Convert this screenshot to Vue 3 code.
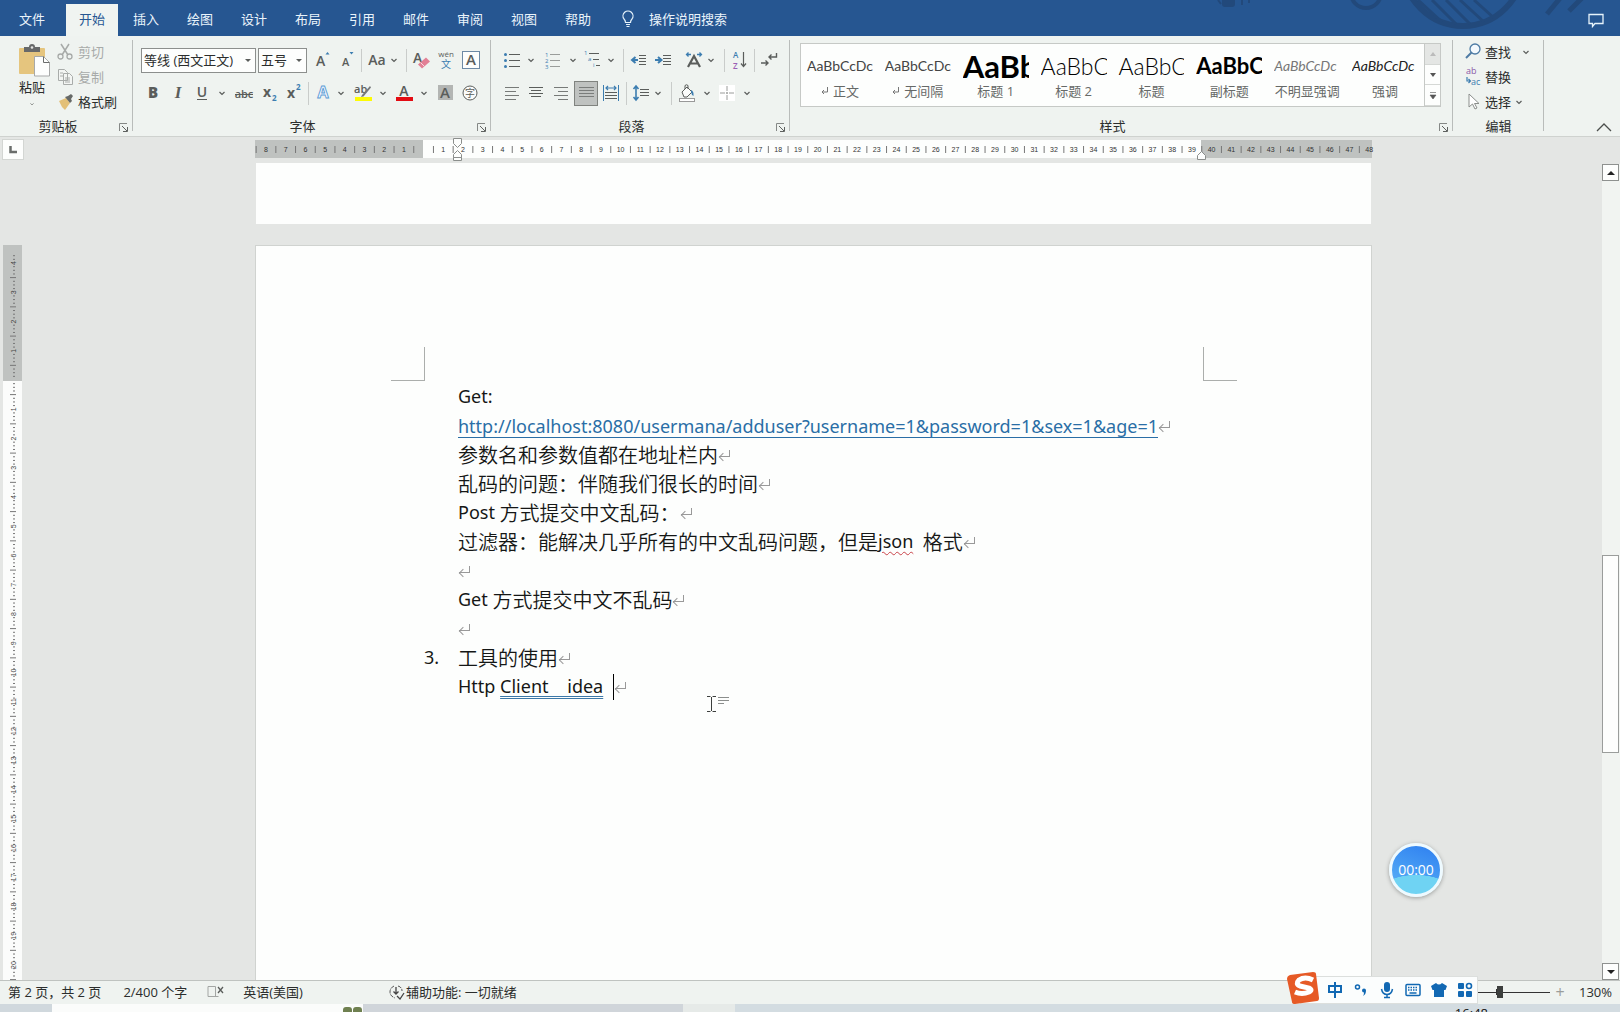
<script setup>
import { ref } from 'vue'

const tabs = ['文件', '开始', '插入', '绘图', '设计', '布局', '引用', '邮件', '审阅', '视图', '帮助']
const activeTab = ref('开始')
const fontName = ref('等线 (西文正文)')
const fontSize = ref('五号')
const zoom = ref(130)

const g = '#5a5d5b'
const b = '#3c7db0'
const line = (x1, y1, x2, y2, c = g, w = 1) =>
  `<path d="M${x1} ${y1}L${x2} ${y2}" stroke="${c}" stroke-width="${w}" fill="none"/>`

const icons = {
  chev: `<path d="M7.5 9l2.5 2.5L12.500 9" fill="none" stroke="${g}" stroke-width="1.200"/>`,
  grow: `<text x="4" y="16" font-size="14" font-weight="600" fill="${g}">A</text><path d="M13.500 4.500l2-2.500 2 2.500z" fill="${b}"/>`,
  shrink: `<text x="5" y="16" font-size="11" font-weight="600" fill="${g}">A</text><path d="M12.500 2l2 2.500 2-2.500z" fill="${b}"/>`,
  case: `<text x="10" y="15" text-anchor="middle" font-size="14" font-weight="600" fill="${g}">Aa</text>`,
  erase: `<text x="1" y="13" font-size="14" font-weight="600" fill="${g}">A</text><path d="M6 14.500l8-7 4 4-8 7z" fill="#e27f95"/><path d="M8.500 12.500l4 4" stroke="#f7dbe1" stroke-width="1"/>`,
  wen: `<text x="10" y="7" text-anchor="middle" font-size="8" fill="${g}">wén</text><text x="10" y="18" text-anchor="middle" font-size="10" fill="${b}">文</text>`,
  boxa: `<rect x="1.500" y="1.500" width="17" height="17" fill="#fdfefd" stroke="#6d8aa6"/><text x="10" y="15" text-anchor="middle" font-size="15" font-weight="600" fill="${g}">A</text>`,
  bold: `<text x="10" y="15" text-anchor="middle" font-size="15" font-weight="800" fill="${g}">B</text>`,
  italic: `<text x="10" y="15" text-anchor="middle" font-size="17" font-weight="700" font-style="italic" font-family="Liberation Serif" fill="${g}">I</text>`,
  under: `<text x="10" y="14" text-anchor="middle" font-size="14" font-weight="600" fill="${g}">U</text>` + line(5, 16.5, 15, 16.5),
  strike: `<text x="10" y="15" text-anchor="middle" font-size="11" font-weight="600" fill="${g}">abc</text>` + line(1, 11.5, 19, 11.5),
  sub: `<text x="3" y="14" font-size="14" font-weight="700" fill="${g}">x</text><text x="12" y="18" font-size="8" font-weight="700" fill="${b}">2</text>`,
  sup: `<text x="3" y="15" font-size="14" font-weight="700" fill="${g}">x</text><text x="12" y="7" font-size="8" font-weight="700" fill="${b}">2</text>`,
  effect: `<text x="10" y="15" text-anchor="middle" font-size="16" font-weight="700" fill="#f5faff" stroke="#5b9bd5" stroke-width=".9">A</text>`,
  mark: `<text x="1" y="10" font-size="11" font-weight="600" fill="${g}">ab</text><path d="M17 3l-8 9-1 2 2.500-.5L18 4.500z" fill="#77797a"/><rect x="2" y="14" width="17" height="4" fill="#fdfb04"/>`,
  color: `<text x="10" y="13" text-anchor="middle" font-size="14" font-weight="600" fill="${g}">A</text><rect x="2" y="14" width="17" height="4" fill="#e30b13"/>`,
  shade: `<rect x="3" y="2" width="15" height="15" fill="#b3b5b3"/><text x="10" y="15" text-anchor="middle" font-size="15" font-weight="600" fill="${g}">A</text>`,
  ring: `<circle cx="10" cy="10" r="7" fill="#fafbfa" stroke="${g}"/><text x="10" y="14" text-anchor="middle" font-size="10" fill="${g}">字</text>`,
  bullets: [4.5, 10.5, 16.5].map(y => `<circle cx="3.500" cy="${y}" r="1.500" fill="${b}"/>` + line(7, y, 18, y)).join(''),
  numbers: [4.5, 10.5, 16.5].map((y, i) => `<text x="2" y="${y + 2}" font-size="6" fill="${b}">${i + 1}</text>` + line(7, y, 17, y, '#9a9d9b')).join(''),
  multi: `<text x="1" y="5" font-size="6" fill="${b}">1</text>` + line(6, 3.5, 16, 3.5) + `<text x="5" y="11" font-size="6" fill="${b}">a</text>` + line(10, 9.5, 16, 9.5) + `<text x="10" y="17" font-size="6" fill="${b}">i</text>` + line(13, 15.5, 17, 15.5),
  outdent: `<path d="M9 10H4M6.500 7L3 10l3.500 3" fill="none" stroke="${b}" stroke-width="2"/>` + [5.5, 8.5, 11.5, 14.5].map(y => line(10, y, 17, y)).join(''),
  indent: `<path d="M2 10h5M5 7l3.500 3L5 13" fill="none" stroke="${b}" stroke-width="2"/>` + [5.5, 8.5, 11.5, 14.5].map(y => line(10, y, 18, y)).join(''),
  asian: `<path d="M4 17L10 6l6 11M6 13.500h8" fill="none" stroke="${g}" stroke-width="2.200"/><path d="M7 4.500H2.500M4.500 2.500l-2 2 2 2M13 4.500h4.500M15.500 2.500l2 2-2 2" fill="none" stroke="${b}" stroke-width="1.300"/>`,
  sort: `<text x="3" y="8" font-size="8" font-weight="600" fill="${b}">A</text><text x="3" y="19" font-size="8" font-weight="600" fill="#9a5fb5">Z</text><path d="M13.500 2v14M11 13.500l2.500 3 2.500-3" fill="none" stroke="${g}" stroke-width="1.200"/>`,
  marks: `<path d="M17.500 3v4H10M12.500 4.500L10 7l2.500 2.500M2 13h7M6.500 10.500L9 13l-2.500 2.500" fill="none" stroke="${g}" stroke-width="1.400"/>`,
  left: [[3, 15], [3, 12], [3, 15], [3, 12]].map(([x, w], i) => line(x, 4.5 + i * 4, x + w - 1, 4.5 + i * 4, '#777a78')).join(''),
  center: [[3, 17], [5, 15], [3, 17], [5, 15]].map(([x, w], i) => line(x, 4.5 + i * 3, w, 4.5 + i * 3)).join(''),
  right: [[3, 17], [7, 17], [3, 17], [7, 17]].map(([x, w], i) => line(x, 4.5 + i * 4, w, 4.5 + i * 4, '#777a78')).join(''),
  justify: [4.5, 7.5, 10.5, 13.5].map(y => line(3, y, 18, y, '#7a7d7b')).join(''),
  dist: line(2.5, 2, 2.5, 18, b) + line(17.5, 2, 17.5, 18, b) + `<path d="M5 5h10M7 3L5 5l2 2M13 3l2 2-2 2" fill="none" stroke="${b}" stroke-width="1.200"/>` + [9.5, 12.5, 15.5].map(y => line(4, y, 16, y)).join(''),
  spacing: `<path d="M5 3v14M2.500 6L5 3l2.500 3M2.500 14L5 17l2.500-3" fill="none" stroke="${b}" stroke-width="1.600"/>` + [6.5, 9.5, 12.5].map(y => line(9, y, 18, y)).join(''),
  bucket: `<path d="M5 9l5-5 5 5-5 5h-3z" fill="#fbfcfb" stroke="${g}"/><path d="M8 6V2.500q1.500-1.500 3 0V6" fill="none" stroke="${g}"/><path d="M14 7q3 1 2.500 6-2-1-2.500-4z" fill="${b}"/><rect x="2.500" y="15.500" width="15" height="3" fill="#fff" stroke="#999"/>`,
  borders: `<rect x="2" y="2" width="16" height="16" fill="#fff"/><path d="M10 3v14M3 10h14" stroke="#9a9c9a" stroke-dasharray="5 1 2 1"/>`,
  cut: `<path d="M5 2l7 11M13 2L6 13" stroke="#a7aaa8" stroke-width="1.500" fill="none"/><circle cx="4.500" cy="14.500" r="2.500" fill="none" stroke="#a7aaa8" stroke-width="1.300"/><circle cx="13.500" cy="14.500" r="2.500" fill="none" stroke="#a7aaa8" stroke-width="1.300"/>`,
  copy: `<path d="M2.500 2.500h6l3 3v8h-9zM7.500 6.500h6l3 3v8h-9z" fill="#f3f5f3" stroke="#a9acaa"/><path d="M4 6h3M4 9h3M9 11h5M9 13h5M9 15h5" stroke="#a9acaa"/>`,
  brush: `<path d="M3 9l7-3 4 5-5 7-3-3z" fill="#e3c078"/><path d="M9 5l5 6 2-2-1-2 2-3-2-2-3 2z" fill="#666967"/>`,
  find: `<circle cx="12" cy="7" r="5" fill="#f4f9fd" stroke="#4e7ba4" stroke-width="1.300"/><path d="M8.500 10.500L3 16" stroke="#4e7ba4" stroke-width="2"/>`,
  replace: `<text x="3" y="7" font-size="9" fill="#8a5aa8">ab</text><text x="8" y="18" font-size="9" fill="${b}">ac</text><path d="M4 10v4h3M5.500 12l2 2-2 2" fill="none" stroke="${b}" stroke-width="1.200"/>`,
  select: `<path d="M6 2v13l3.500-3 2.500 5 2-1-2.500-4.500H16z" fill="#fff" stroke="#8b8e8c"/>`,
  launch: `<path d="M6.500 14V6.500H14" fill="none" stroke="#858886"/><path d="M9 9l5 5M14.500 10v4.500H10" fill="none" stroke="#5f6260"/>`,
}

const fontRow1 = [['grow', 30, '增大字号'], ['shrink', 20, '减小字号'], ['|', 8], ['case', 24, '更改大小写'], ['chev', 10, '大小写选项'], ['|', 14], ['erase', 18, '清除格式'], ['wen', 30, '拼音指南'], ['boxa', 20, '字符边框']]
const fontRow2 = [['bold', 24, '加粗'], ['italic', 26, '倾斜'], ['under', 22, '下划线'], ['chev', 18, '下划线选项'], ['strike', 26, '删除线'], ['sub', 26, '下标'], ['sup', 22, '上标'], ['|', 6], ['effect', 24, '文本效果'], ['chev', 12, '效果选项'], ['mark', 32, '突出显示'], ['chev', 8, '突出显示选项'], ['color', 34, '字体颜色'], ['chev', 6, '颜色选项'], ['shade', 36, '字符底纹'], ['ring', 14, '带圈字符']]
const paraRow1 = [['bullets', 24, '项目符号'], ['chev', 14, '符号选项'], ['numbers', 30, '编号'], ['chev', 10, '编号选项'], ['multi', 30, '多级列表'], ['chev', 6, '列表选项'], ['|', 18], ['outdent', 14, '减少缩进'], ['indent', 34, '增加缩进'], ['|', 0], ['asian', 28, '中文版式'], ['chev', 6, '版式选项'], ['|', 20], ['sort', 12, '排序'], ['|', 16], ['marks', 14, '显示标记']]
const paraRow2 = [['left', 24, '左对齐'], ['center', 24, '居中'], ['right', 26, '右对齐'], ['justify', 24, '两端对齐'], ['dist', 26, '分散对齐'], ['|', 4], ['spacing', 26, '行距'], ['chev', 8, '行距选项'], ['|', 18], ['bucket', 14, '底纹'], ['chev', 26, '底纹选项'], ['borders', 14, '边框'], ['chev', 26, '边框选项']]

const styles = [
  { name: '正文', sample: 'AaBbCcDc', mark: true },
  { name: '无间隔', sample: 'AaBbCcDc', mark: true },
  { name: '标题 1', sample: 'AaBb', kind: 'h1' },
  { name: '标题 2', sample: 'AaBbC', kind: 'h2' },
  { name: '标题', sample: 'AaBbC', kind: 'h2' },
  { name: '副标题', sample: 'AaBbC', kind: 'sub' },
  { name: '不明显强调', sample: 'AaBbCcDc', kind: 'soft' },
  { name: '强调', sample: 'AaBbCcDc', kind: 'em' },
]

const unitX = 19.7
const hTicks = Array.from({ length: 57 }, (_, i) => ({
  n: Math.abs(i - 8),
  x: 11 + i * unitX,
  t: 11 + i * unitX - unitX / 2,
}))
const unitY = 29.25
const vTicks = Array.from({ length: 26 }, (_, i) => ({ n: Math.abs(i - 4), y: 18 + i * unitY }))
const vDots = Array.from({ length: 206 }, (_, i) => ({ y: 18 + (i - 2) * unitY / 8, k: (i + 6) % 8 }))
  .filter(d => d.k !== 0 && d.k !== 4)
</script>

<template>
  <div class="app">
    <header class="tabs">
      <svg class="decor" width="420" height="36" viewBox="0 0 420 36" aria-hidden="true">
        <g fill="none" stroke="#22497b">
          <circle cx="263" cy="-34" r="60" stroke-width="6" />
          <circle cx="166" cy="-7" r="15" stroke-width="4" />
          <path d="M218 0l24 22M232 0l24 24M246 0l24 24M260 0l24 22M274 0l20 18" stroke-width="3" />
          <path d="M347 14L361-3M369 11L383-3" stroke-width="5" />
          <path d="M18 0l3 4M42 0v5M49 0v3" stroke-width="2" />
        </g>
        <rect x="22" y="-3" width="13" height="10" rx="3" fill="#22497b" />
      </svg>
      <button v-for="t in tabs" :key="t" class="tab" :class="{ on: t === activeTab }" @click="activeTab = t">{{ t }}</button>
      <button class="tell">
        <svg width="16" height="20" viewBox="0 0 16 20"><path d="M5.500 13.500q0-2-1.500-3.500a5 5 0 1 1 8 0q-1.500 1.500-1.500 3.500zM6 15.500h4M6.500 17.500h3" fill="none" stroke="#e6f3fb" stroke-width="1.200" /></svg>
        <span>操作说明搜索</span>
      </button>
      <button class="comment" aria-label="批注">
        <svg width="16" height="15" viewBox="0 0 16 15"><path d="M1 1.500h14v9H7l-2.500 3v-3H1z" fill="none" stroke="#e6f3fb" stroke-width="1.300" /></svg>
      </button>
    </header>

    <section class="ribbon">
      <div class="group clip">
        <div class="clipbody">
          <button class="paste">
            <svg width="32" height="34" viewBox="0 0 32 34">
              <rect x="1" y="4" width="26" height="26" rx="1" fill="#e5c57e" />
              <path d="M6 3h5q0-3 3-3t3 3h5v5H6z" fill="#67696a" /><circle cx="14" cy="3.500" r="1.300" fill="#e5e6e4" />
              <path d="M16.500 12.500h9l6 6V32h-15z" fill="#fdfefd" stroke="#a7a9a8" /><path d="M25.500 12.500v6h6" fill="none" stroke="#6a6c6b" />
            </svg>
            <span>粘贴</span>
            <svg class="ic" v-html="icons.chev" viewBox="0 0 20 20" />
          </button>
          <div class="cliplist">
            <button class="mini off"><svg class="ic" v-html="icons.cut" viewBox="0 0 20 20" />剪切</button>
            <button class="mini off"><svg class="ic" v-html="icons.copy" viewBox="0 0 20 20" />复制</button>
            <button class="mini"><svg class="ic" v-html="icons.brush" viewBox="0 0 20 20" />格式刷</button>
          </div>
        </div>
        <footer><span>剪贴板</span><button aria-label="剪贴板选项"><svg class="ic" v-html="icons.launch" viewBox="0 0 20 20" /></button></footer>
      </div>

      <div class="group font">
        <div class="row">
          <label class="combo name"><select v-model="fontName" aria-label="字体"><option>等线 (西文正文)</option></select></label>
          <label class="combo size"><select v-model="fontSize" aria-label="字号"><option>五号</option></select></label>
          <template v-for="([n, w, t], i) in fontRow1" :key="i">
            <i v-if="n === '|'" class="bar" :style="{ width: w + 'px' }" />
            <button v-else class="tool" :style="{ width: w + 'px' }" :aria-label="t"><svg class="ic" v-html="icons[n]" viewBox="0 0 20 20" /></button>
          </template>
        </div>
        <div class="row">
          <template v-for="([n, w, t], i) in fontRow2" :key="i">
            <i v-if="n === '|'" class="bar" :style="{ width: w + 'px' }" />
            <button v-else class="tool" :style="{ width: w + 'px' }" :aria-label="t"><svg class="ic" v-html="icons[n]" viewBox="0 0 20 20" /></button>
          </template>
        </div>
        <footer><span>字体</span><button aria-label="字体选项"><svg class="ic" v-html="icons.launch" viewBox="0 0 20 20" /></button></footer>
      </div>

      <div class="group para">
        <div v-for="(r, k) in [paraRow1, paraRow2]" :key="k" class="row">
          <template v-for="([n, w, t], i) in r" :key="i">
            <i v-if="n === '|'" class="bar" :style="{ width: w + 'px' }" />
            <button v-else class="tool" :class="{ pressed: n === 'justify' }" :style="{ width: w + 'px' }" :aria-label="t"><svg class="ic" v-html="icons[n]" viewBox="0 0 20 20" /></button>
          </template>
        </div>
        <footer><span>段落</span><button aria-label="段落选项"><svg class="ic" v-html="icons.launch" viewBox="0 0 20 20" /></button></footer>
      </div>

      <div class="group look">
        <div class="gallery">
          <button v-for="s in styles" :key="s.name" class="style">
            <span class="sample" :class="s.kind">{{ s.sample }}</span>
            <span class="cap"><svg v-if="s.mark" width="8" height="8" viewBox="0 0 8 8"><path d="M6.500 0v5H1M3 3L1 5l2 2" fill="none" stroke="#777" /></svg>{{ s.name }}</span>
          </button>
          <div class="nav">
            <button aria-label="上一行" class="dim"><svg width="8" height="4" viewBox="0 0 8 4"><path d="M1 4l3-4 3 4z" fill="#bbb" /></svg></button>
            <button aria-label="下一行"><svg width="8" height="4" viewBox="0 0 8 4"><path d="M1 0l3 4 3-4z" fill="#555" /></svg></button>
            <button aria-label="更多样式"><svg width="8" height="7" viewBox="0 0 8 7"><path d="M1 .500h6M1 3l3 4 3-4z" fill="#555" stroke="#555" stroke-width=".6" /></svg></button>
          </div>
        </div>
        <footer><span>样式</span><button aria-label="样式选项"><svg class="ic" v-html="icons.launch" viewBox="0 0 20 20" /></button></footer>
      </div>

      <div class="group edit">
        <div class="cliplist">
          <button class="mini wide"><svg class="ic" v-html="icons.find" viewBox="0 0 20 20" /><span>查找</span><svg class="ic" v-html="icons.chev" viewBox="0 0 20 20" /></button>
          <button class="mini"><svg class="ic" v-html="icons.replace" viewBox="0 0 20 20" />替换</button>
          <button class="mini"><svg class="ic" v-html="icons.select" viewBox="0 0 20 20" />选择<svg class="ic near" v-html="icons.chev" viewBox="0 0 20 20" /></button>
        </div>
        <footer><span>编辑</span></footer>
      </div>
      <div class="fold">
        <button aria-label="折叠功能区"><svg width="16" height="10" viewBox="0 0 16 10"><path d="M1 9l7-7 7 7" fill="none" stroke="#4c4f4d" stroke-width="1.300" /></svg></button>
      </div>
    </section>

    <main class="work">
      <aside class="side">
        <button class="tabstop" aria-label="制表符"><svg width="8" height="8" viewBox="0 0 8 8"><path d="M1.500 0v6H8" fill="none" stroke="#6a6d6b" stroke-width="2.500" /></svg></button>
        <div class="vruler">
          <svg width="19" height="760" viewBox="0 0 19 760" font-family="Liberation Sans, sans-serif">
            <g stroke="#777" stroke-width="1">
              <line v-for="d in vDots" :key="d.y" x1="10" x2="12" :y1="d.y" :y2="d.y" />
              <line v-for="t in vTicks" :key="t.n + '-' + t.y" x1="7" x2="13" :y1="t.y + 14.6" :y2="t.y + 14.6" />
            </g>
            <template v-for="t in vTicks" :key="t.y">
              <text v-if="t.n" :transform="`translate(13 ${t.y}) rotate(-90)`" font-size="7" text-anchor="middle" fill="#444">{{ t.n }}</text>
            </template>
          </svg>
        </div>
      </aside>

      <div class="canvas">
        <div class="hruler">
          <svg width="1117" height="24" viewBox="0 0 1117 24" font-family="Liberation Sans, sans-serif">
            <template v-for="t in hTicks" :key="t.x">
              <line :x1="t.t" :x2="t.t" y1="6" y2="13" stroke="#777" />
              <text v-if="t.x < 1117 && t.n" :x="t.x" y="12" font-size="7" text-anchor="middle" fill="#333">{{ t.n }}</text>
            </template>
            <g fill="#fdfefd" stroke="#8b8e8c">
              <path d="M198.500-1.500h8v5l-4 4-4-4z" /><path d="M198.500 17.500v-3l4-4 4 4v3zM198.500 17.500h8v3h-8z" />
              <path d="M942.500 19.500v-4l4-4 4 4v4z" />
            </g>
          </svg>
        </div>
        <div class="sheet prev" />
        <article class="sheet">
          <div class="corners"><i class="corner l" /><i class="corner r" /></div>
          <div class="text">
            <p><b>Get:</b></p>
            <p><a href="#"><b>http://localhost:8080/usermana/adduser?username=1&amp;password=1&amp;sex=1&amp;age=1</b></a><i class="ret" /></p>
            <p>参数名和参数值都在地址栏内<i class="ret" /></p>
            <p>乱码的问题：伴随我们很长的时间<i class="ret" /></p>
            <p><b>Post&nbsp;</b>方式提交中文乱码：<i class="ret" /></p>
            <p>过滤器：能解决几乎所有的中文乱码问题，但是<b><u class="spell">json</u>&nbsp;&nbsp;</b>格式<i class="ret" /></p>
            <p><i class="ret" /></p>
            <p><b>Get&nbsp;</b>方式提交中文不乱码<i class="ret" /></p>
            <p><i class="ret" /></p>
            <p class="item"><b class="num">3.</b>工具的使用<i class="ret" /></p>
            <p><b>Http <u class="gram">Client&nbsp;&nbsp;&nbsp;&nbsp;idea</u>&nbsp;&nbsp;</b><i class="caret" /><i class="ret" /></p>
          </div>
          <svg class="mouse" width="24" height="20" viewBox="0 0 24 20"><path d="M1 1.500h3.500M6.500 1.500H10M5.500 2v14M1 16.500h3.500M6.500 16.500H10" stroke="#3c3f3d" fill="none" /><path d="M12 2.500h11M12 5.500h11M12 8.500h6" stroke="#8b8e8c" /></svg>
        </article>
      </div>

      <div class="scroll">
        <button aria-label="向上滚动"><svg width="8" height="4" viewBox="0 0 8 4"><path d="M0 4l4-4 4 4z" fill="#222" /></svg></button>
        <div class="track"><div class="thumb" /></div>
        <button aria-label="向下滚动"><svg width="8" height="4" viewBox="0 0 8 4"><path d="M0 0l4 4 4-4z" fill="#222" /></svg></button>
      </div>
      <div class="timer">00:00</div>
    </main>

    <footer class="status">
      <span class="pages">第 2 页，共 2 页</span>
      <span class="words">2/400 个字</span>
      <svg class="proof" width="18" height="14" viewBox="0 0 18 14"><path d="M8.500 2v10M1 1.500h7.500v10H1zM8.500 11.500h3" fill="none" stroke="#a3a6a4" /><path d="M11 2l5 6M16 2l-5 6" stroke="#5a5d5b" stroke-width="1.300" /></svg>
      <span class="lang">英语(美国)</span>
      <span class="access"><svg width="18" height="16" viewBox="0 0 18 16"><path d="M6 2Q2 4 2 8t5 6M10 2q4 1 4 5" fill="none" stroke="#555" stroke-dasharray="4 1" /><path d="M8 3v7M5.500 7.500L8 10l2.500-2.500M9 12l3 3 4-6" fill="none" stroke="#444" stroke-width="1.300" /></svg>辅助功能: 一切就绪</span>
      <label class="zoom"><input v-model="zoom" type="range" min="10" max="240" aria-label="显示比例" /></label>
      <button class="plus" aria-label="放大">+</button>
      <span class="pct">{{ zoom }}%</span>
    </footer>

    <div class="taskbar">
      <div class="window"><svg width="20" height="8" viewBox="0 0 20 8"><rect x="0" y="3" width="9" height="9" rx="3" fill="#6f8050" /><rect x="10" y="3" width="9" height="9" rx="3" fill="#6f8050" /></svg></div>
      <div class="strip" /><div class="gap" /><div class="rest"><span>16:48</span></div>
    </div>

    <div class="ime">
      <svg class="logo" width="36" height="34" viewBox="0 0 36 34"><path d="M5 4L28 1q3 0 3 2l3 24q0 3-2 3L10 33q-3 0-3-2L2 8q0-3 3-4z" fill="#e65a26" /><path d="M28 9q-8-4-14 0-4 4 1 6l9 2q4 2 0 4-7 3-14 0" fill="none" stroke="#fff" stroke-width="5" /></svg>
      <svg width="16" height="18" viewBox="0 0 16 18"><path d="M2 5h12v6H2zM8 1v16" fill="none" stroke="#1168b3" stroke-width="2" /></svg>
      <svg width="16" height="18" viewBox="0 0 16 18"><circle cx="4.500" cy="6" r="2" fill="none" stroke="#1168b3" stroke-width="1.500" /><path d="M9 9.500a2 2 0 1 1 4 0q0 4-3 5.500 1-1.500 1-3.500-2 0-2-2z" fill="#1168b3" /></svg>
      <svg width="16" height="18" viewBox="0 0 16 18"><rect x="5" y="1" width="6" height="10" rx="3" fill="#1168b3" /><path d="M2.500 8q1 5.500 5.500 5.500T13.500 8M8 13v3M5 16.500h6" fill="none" stroke="#1168b3" stroke-width="1.500" /></svg>
      <svg width="16" height="18" viewBox="0 0 16 18"><rect x="1" y="3.500" width="14" height="11" rx="1" fill="none" stroke="#1168b3" stroke-width="1.500" /><path d="M3 6.500h10M3 9h10" stroke="#1168b3" stroke-width="1.500" stroke-dasharray="1.500 1" /><path d="M4.500 12h7" stroke="#1168b3" stroke-width="1.500" /></svg>
      <svg width="16" height="18" viewBox="0 0 16 18"><path d="M5 2q3 3 6 0l5 3-1.500 4H13v7H3V9H1.500L0 5z" fill="#1168b3" /></svg>
      <svg width="16" height="18" viewBox="0 0 16 18"><rect x="1" y="2" width="6" height="6" rx="1" fill="#1168b3" /><circle cx="12" cy="5" r="2.500" fill="none" stroke="#1168b3" stroke-width="1.600" /><rect x="1" y="10" width="6" height="6" rx="1" fill="#1168b3" /><rect x="9" y="10" width="6" height="6" rx="1" fill="#1168b3" /></svg>
    </div>
  </div>
</template>

<style>
body { margin: 0; overflow: hidden; }
</style>

<style scoped>
* { box-sizing: border-box; }
.app { position: relative; display: flex; flex-direction: column; height: 100vh; overflow: hidden; font: 13px/18px "Open Sans", "Noto Sans CJK SC", sans-serif; color: #2b2d2c; background: #e4e6e4; }
button { border: 0; padding: 0; background: none; font: inherit; color: inherit; }
svg { display: block; flex: none; }
.ic { width: 20px; height: 20px; overflow: visible; }

.tabs { position: relative; display: flex; flex: none; height: 36px; padding: 4px 0 0 5px; background: #265691; color: #eaf4fb; }
.decor { position: absolute; top: 0; right: 0; }
.tab { width: 54px; padding-bottom: 2px; }
.tab.on { width: 52px; margin: 0 1px 0 7px; background: #f0f4f1; color: #265691; }
.tell { display: flex; align-items: center; gap: 13px; margin-left: 15px; padding-bottom: 2px; }
.comment { position: relative; margin: 0 16px 0 auto; }

.ribbon { display: flex; flex: none; height: 101px; background: #eff3f0; border-bottom: 1px solid #cfd2cf; }
.group { position: relative; display: flex; flex-direction: column; flex: none; margin: 4px 0 5px; border-right: 1px solid #b9bcba; }
.group > footer { display: flex; align-items: center; justify-content: center; height: 18px; margin: auto 0 -4px; line-height: 18px; }
.group > footer button { position: absolute; right: -1px; bottom: -6px; }
.clip { width: 133px; }
.clip > footer { padding-right: 16px; }
.clipbody { display: flex; }
.paste { display: flex; flex-direction: column; align-items: center; width: 56px; padding: 4px 0 0 8px; }
.paste svg:first-child { margin-left: 4px; }
.paste .ic { height: 12px; margin-top: 2px; }
.cliplist { display: flex; flex-direction: column; }
.clip .cliplist, .edit .cliplist { margin-top: -1px; }
.mini { display: flex; align-items: center; gap: 2px; height: 25px; }
.mini.off { color: #a7aaa8; }
.font { width: 358px; padding-left: 8px; }
.font > footer, .para > footer { padding-right: 26px; }
.row { display: flex; align-items: center; height: 24px; margin-top: 8px; }
.row + .row { margin-top: 9px; }
.combo { position: relative; display: flex; height: 25px; margin-right: 2px; }
.combo::after { content: ""; position: absolute; right: 5px; top: 11px; border: 3px solid transparent; border-top-color: #5a5d5b; }
.combo.name { width: 115px; }
.combo.size { width: 49px; margin-right: 0; }
.combo select { width: 100%; appearance: none; padding: 0 0 0 2px; border: 1px solid #8c8f8d; border-radius: 0; background: #fdfefd; font: inherit; color: #2b2d2c; }
.bar { flex: none; height: 23px; background: linear-gradient(#c9ccca, #c9ccca) center / 1px 100% no-repeat; }
.tool { display: flex; flex: none; align-items: center; justify-content: center; height: 25px; }
.tool.pressed { background: #bfc2c0; border: 1px solid #80837f; }
.para { width: 299px; padding-left: 9px; }
.look { flex: 1; min-width: 0; padding: 3px 11px 0 10px; }
.look > footer { padding-right: 16px; }
.gallery { display: flex; height: 64px; border: 1px solid #c6c9c6; background: #fdfefd; }
.style { display: flex; flex: 1; flex-direction: column; align-items: center; min-width: 0; }
.sample { width: 66px; height: 38px; padding-top: 3px; overflow: hidden; text-align: left; white-space: nowrap; font: 14px/38px Lato, sans-serif; color: #444; }
.sample.h1 { font-size: 31px; font-weight: 700; color: #000; }
.sample.h2 { font-size: 23px; font-weight: 300; color: #000; }
.sample.sub { font-size: 22px; font-weight: 700; color: #000; }
.sample.soft { font-style: italic; color: #777; }
.sample.em { font-style: italic; color: #222; }
.cap { display: flex; align-items: center; gap: 4px; color: #666967; white-space: nowrap; }
.nav { display: flex; flex-direction: column; width: 16px; border-left: 1px solid #c6c9c6; }
.nav button { display: flex; flex: 1; align-items: center; justify-content: center; border-bottom: 1px solid #d5d8d5; }
.nav .dim { background: #e4e6e4; }
.edit { width: 91px; padding-left: 10px; }
.edit > footer { padding-right: 9px; }
.mini.wide span { margin-right: 3px; }
.mini .near { margin-left: -4px; }
.fold { display: flex; align-items: flex-end; justify-content: flex-end; width: 76px; padding: 0 8px 4px 0; }

.work { position: relative; display: flex; flex: 1; min-height: 0; }
.side { display: flex; flex-direction: column; width: 24px; padding-top: 2px; }
.tabstop { display: flex; align-items: center; justify-content: center; flex: none; width: 22px; height: 21px; margin-left: 2px; background: #fdfefd; border: 1px solid #d3d6d3; }
.vruler { flex: 1; width: 19px; margin: 85px 0 0 3px; overflow: hidden; background: linear-gradient(#bfc2c0 136px, #fbfcfb 136px); }
.canvas { display: flex; flex: 1; flex-direction: column; align-items: center; min-width: 0; overflow: hidden; padding: 3px 0 0 1px; }
.hruler { flex: none; width: 1117px; height: 23px; background: linear-gradient(90deg, #bfc2c0 168px, #fdfefd 168px 946px, #bfc2c0 946px) top / 100% 18px no-repeat; }
.hruler svg { overflow: visible; }
.sheet { position: relative; flex: 1; width: 1115px; background: #fdfefd; outline: 1px solid #d0d3d0; }
.sheet.prev { flex: none; height: 61px; margin-bottom: 22px; outline: 0; }
.corners { display: flex; justify-content: space-between; padding: 101px 134px 0 135px; }
.corner { width: 34px; height: 34px; border-bottom: 1px solid #abaeac; }
.corner.l { border-right: 1px solid #abaeac; }
.corner.r { border-left: 1px solid #abaeac; }
.text { padding: 1px 0 0 202px; color: #151716; font-family: "Noto Sans CJK SC", sans-serif; font-size: 20px; font-weight: 350; line-height: 29px; }
.text p { display: flex; align-items: center; height: 29px; margin: 0; white-space: pre; }
.text b { font: 400 18px/29px "Noto Sans", sans-serif; white-space: pre; }
.text a { color: #2a6ea6; text-decoration: underline; text-decoration-thickness: 1px; text-underline-offset: 4px; }
.num { width: 34px; margin-left: -34px; }
.ret { flex: none; width: 12px; height: 10px; background: linear-gradient(#999, #999) right top / 1px 7px no-repeat, linear-gradient(#999, #999) 1px 6px / 11px 1px no-repeat; position: relative; }
.ret::after { content: ""; position: absolute; left: 2px; top: 4px; width: 5px; height: 5px; border: solid #999; border-width: 0 0 1px 1px; transform: rotate(45deg); }
.caret { width: 1px; height: 26px; background: #000; }
.spell { text-decoration: underline wavy #c9434a 1px; text-underline-offset: 3px; }
.gram { text-decoration: underline double #3c78a8 1px; text-underline-offset: 3px; }
.mouse { position: absolute; left: 450px; top: 449px; }

.scroll { display: flex; flex-direction: column; width: 18px; padding-top: 27px; background: linear-gradient(#e4e6e4 27px, #f1f4f1 27px); }
.scroll button { display: flex; align-items: center; justify-content: center; flex: none; width: 17px; height: 17px; border: 1px solid #8e918f; background: #fdfefd; }
.track { display: flex; flex-direction: column; flex: 1; }
.track::before { content: ""; flex: 374; }
.track::after { content: ""; flex: 210; }
.thumb { flex: 197; width: 17px; border: 1px solid #9a9d9b; background: #fdfefd; }
.timer { position: absolute; right: 177px; bottom: 83px; width: 54px; height: 54px; border: 3px solid #eefaff; border-radius: 50%; background: radial-gradient(ellipse 48px 24px at 50% 100%, #6fd3f3 78%, transparent 80%), linear-gradient(200deg, #2e7ff0, #4fa6f5 70%); box-shadow: 0 1px 4px #9a9d9b; color: #fff; font-size: 14px; line-height: 48px; text-align: center; }

.status { display: flex; align-items: center; flex: none; height: 24px; padding: 0 8px 1px; background: #eff3f0; border-top: 1px solid #bfc3c0; white-space: nowrap; }
.words { margin-left: 22px; }
.proof { margin-left: 20px; }
.lang { margin-left: 18px; }
.access { display: flex; align-items: center; margin-left: 85px; }
.zoom { display: flex; margin-left: auto; }
.zoom input { width: 104px; height: 14px; margin: 0; appearance: none; background: linear-gradient(#333, #333) 50px 4px / 1px 6px no-repeat, linear-gradient(#333, #333) center / 100% 1px no-repeat; }
.zoom input::-webkit-slider-thumb { appearance: none; width: 6px; height: 12px; background: #3c3f3d; }
.plus { width: 20px; color: #9a9d9b; font-size: 16px; }
.pct { margin-left: 9px; }

.taskbar { display: flex; flex: none; height: 8px; padding-left: 52px; overflow: hidden; background: #d0d8dd; }
.window { display: flex; justify-content: flex-end; width: 311px; background: #fbfcfb; }
.strip { width: 320px; background: #d0d5da; }
.gap { width: 52px; background: #e6eae8; }
.rest { flex: 1; padding-right: 132px; text-align: right; background: #d3dce1; }
.rest span { line-height: 18px; color: #111; }
.ime { position: absolute; right: 142px; bottom: 8px; display: flex; align-items: center; justify-content: flex-end; gap: 10px; width: 178px; height: 28px; padding-right: 4px; background: #fbfdfd; border: 1px solid #dcdfdd; }
.logo { margin: -4px -4px 0 0; }
</style>
